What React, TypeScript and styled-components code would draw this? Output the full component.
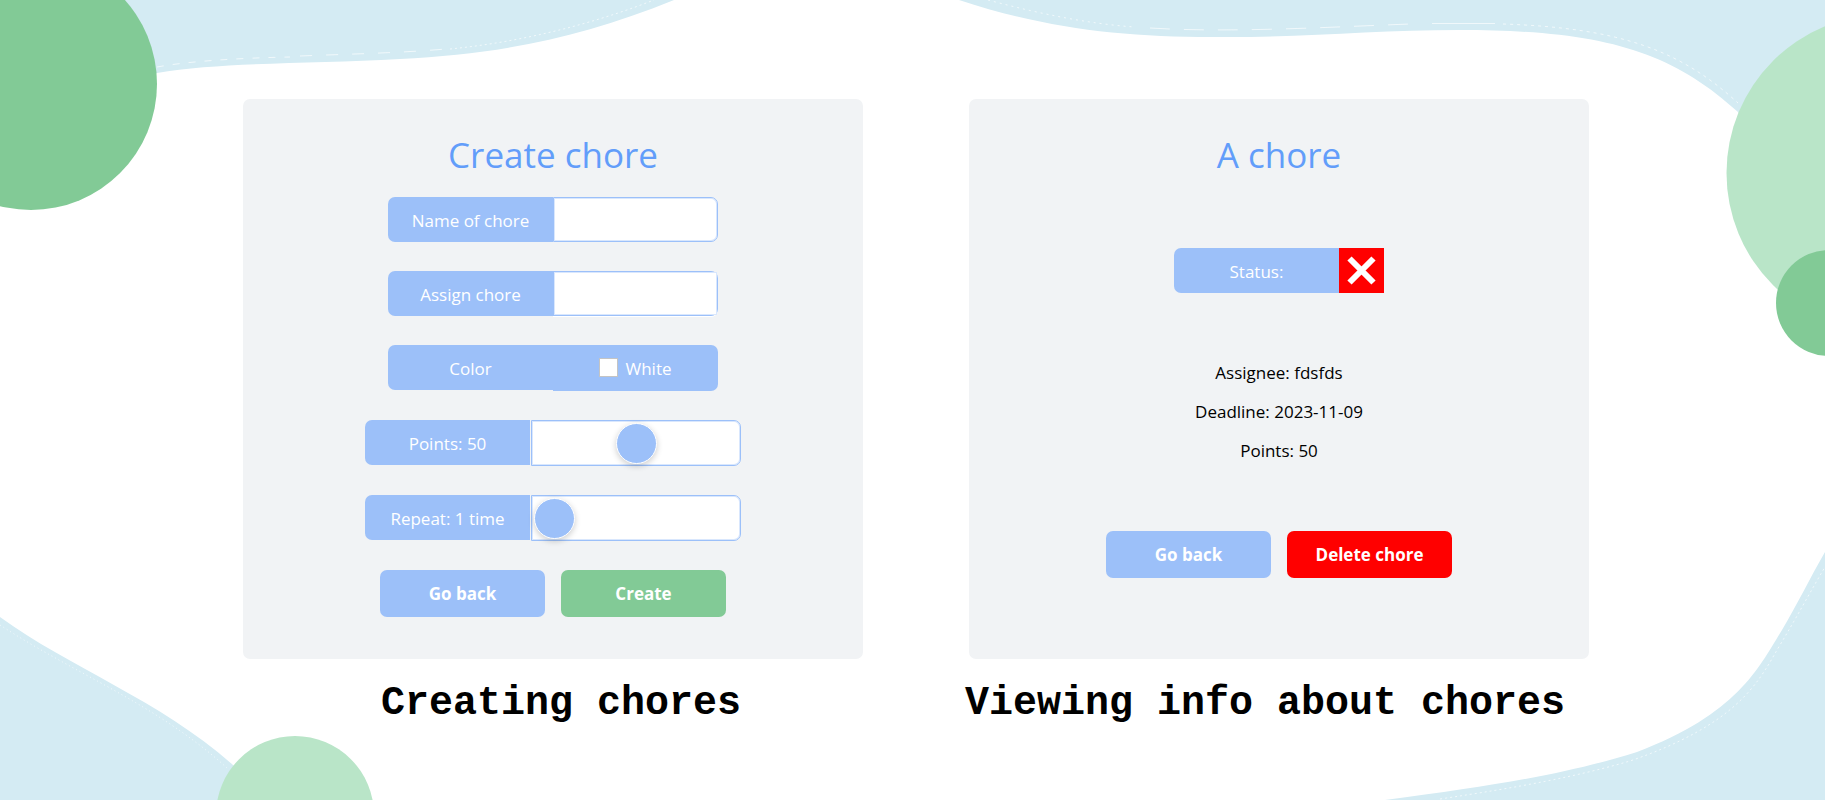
import React, { useState } from "react";
import styled, { createGlobalStyle } from "styled-components";

const color = {
  blue: "#9cc0f9",
  paleBlue: "#d9e7fd",
  title: "#629dfa",
  green: "#82ca96",
  mint: "#b9e5c8",
  sky: "#d4ebf3",
  card: "#f1f3f5",
  red: "#ff0000",
};

const GlobalStyle = createGlobalStyle`
  *, *::before, *::after { box-sizing: border-box; }
  body {
    margin: 0;
    background: #fff;
    font-family: "Segoe UI", "Open Sans", "Noto Sans", sans-serif;
    font-size: 17px;
    line-height: 24px;
    color: #000;
  }
`;

const Page = styled.main`
  position: relative;
  isolation: isolate;
  overflow: hidden;
  min-height: 100vh;
  padding: 99px 0 62px 7px;
`;

const Backdrop = styled.svg`
  position: absolute;
  inset: 0;
  z-index: -1;
  width: 100%;
  height: 100%;
`;

const Cards = styled.div`
  display: flex;
  justify-content: center;
  gap: 106px;
`;

const Card = styled.section`
  display: flex;
  flex-direction: column;
  align-items: center;
  width: 620px;
  min-height: 560px;
  padding: 28px 24px 42px;
  border-radius: 7px;
  background: ${color.card};
`;

const FormCard = styled(Card).attrs({ as: "form" })`
  gap: 29px;
`;

const Title = styled.h1<{ $space: number }>`
  margin: 0 0 ${(p) => p.$space}px;
  font-size: 35px;
  line-height: 56px;
  font-weight: 400;
  color: ${color.title};
`;

const Field = styled.div<{ $gap?: number }>`
  display: flex;
  align-items: flex-start;
  gap: ${(p) => p.$gap ?? 0}px;
`;

const Tag = styled.label`
  display: flex;
  align-items: center;
  justify-content: center;
  width: 165px;
  height: 45px;
  padding-top: 2px;
  border-radius: 7px 0 0 7px;
  background: ${color.blue};
  color: #fff;
`;

const TextBox = styled.input`
  width: 165px;
  height: 45px;
  padding: 0 12px;
  border: 1px solid ${color.blue};
  border-radius: 0 7px 7px 0;
  background: #fff;
  box-shadow: inset 0 0 0 1px ${color.paleBlue};
  font: inherit;
`;

const SelectFrame = styled.div`
  width: 165px;
  height: 45px;
  padding: 1px;
  border-radius: 0 7px 7px 0;
  background: ${color.blue};
  box-shadow: 0 1px 0 #fff;
`;

const Select = styled.select`
  display: block;
  width: 100%;
  height: 100%;
  padding: 0 12px;
  border: 0;
  border-radius: 0;
  appearance: none;
  background: #fff;
  box-shadow: inset 0 0 0 1px ${color.paleBlue};
  font: inherit;
`;

const ColorButton = styled.button`
  display: flex;
  align-items: center;
  justify-content: center;
  gap: 7px;
  width: 165px;
  height: 46px;
  padding: 2px 0 0;
  border: 0;
  border-radius: 0 7px 7px 0;
  background: ${color.blue};
  color: #fff;
  font: inherit;
`;

const Swatch = styled.span`
  width: 19px;
  height: 19px;
  margin-bottom: 3px;
  border: 1px solid #c4c4c4;
  background: #fff;
`;

const Slider = styled.input.attrs({ type: "range" })`
  appearance: none;
  width: 210px;
  height: 46px;
  margin: 0;
  padding: 0 2px;
  border: 1px solid ${color.blue};
  border-radius: 0 7px 7px 0;
  background: #fff;
  box-shadow: inset 0 0 0 1px ${color.paleBlue};

  &::-webkit-slider-thumb {
    appearance: none;
    width: 41px;
    height: 41px;
    border: 1px solid #fff;
    border-radius: 50%;
    background: ${color.blue};
    box-shadow: 0 2px 6px rgba(0, 0, 0, 0.2);
  }
`;

const Actions = styled.div`
  display: flex;
  gap: 16px;
`;

const Button = styled.button<{ $tone: string }>`
  width: 165px;
  height: 47px;
  padding: 0;
  border: 0;
  border-radius: 7px;
  background: ${(p) => p.$tone};
  color: #fff;
  font: inherit;
  font-weight: 700;
`;

const InfoCard = styled(Card)`
  justify-content: space-between;
  padding-bottom: 81px;
`;

const StatusTag = styled(Tag).attrs({ as: "span" })``;

const StatusButton = styled.button`
  display: flex;
  align-items: center;
  justify-content: center;
  width: 45px;
  height: 45px;
  padding: 0;
  border: 0;
  background: ${color.red};
`;

const Details = styled.div`
  display: grid;
  gap: 15px;
  text-align: center;
`;

const Detail = styled.p`
  margin: 0;
`;

const Captions = styled.div`
  display: flex;
  justify-content: center;
  gap: 224px;
  margin-top: 22px;
  padding-left: 114px;
`;

const Caption = styled.h2`
  margin: 0;
  font-family: "Courier New", "Liberation Mono", monospace;
  font-size: 40px;
  line-height: 46px;
  font-weight: 700;
  white-space: nowrap;
`;

function Background() {
  return (
    <Backdrop viewBox="0 0 1825 800" preserveAspectRatio="none" aria-hidden="true">
      <g fill={color.sky}>
        <path d="M0 110 L100 86 L157 73 C220 62 310 64 400 59 C500 54 580 38 674 0 H0Z" />
        <path d="M959 0 C1050 30 1130 38 1228 37 C1310 37 1380 30 1459 30 C1600 30 1670 50 1738 112 L1825 220 V0Z" />
        <path d="M0 617 C70 668 160 700 233 765 L270 800 H0Z" />
        <path d="M1385 800 C1500 785 1570 773 1637 752 C1740 713 1760 665 1782 630 C1798 603 1810 578 1825 552 V800Z" />
      </g>
      <g fill="none" stroke="#fff" strokeWidth="1" strokeOpacity="0.65">
        <path d="M157 67 C190 61 240 58 290 57" strokeDasharray="7 9" />
        <path d="M300 56 C350 54 400 53 446 49" strokeDasharray="12 14" />
        <path d="M450 49 C520 42 590 25 654 0" strokeDasharray="2 3" />
        <path d="M988 0 C1040 14 1090 24 1135 27" strokeDasharray="2 4" />
        <path d="M1150 28 C1230 33 1330 27 1410 24" strokeDasharray="20 14" />
        <path d="M1432 23.500 H1495" />
        <path d="M1503 24 C1620 28 1680 50 1738 103" strokeDasharray="3 4" />
        <path d="M0 625 C75 674 158 705 227 768" strokeDasharray="1 3" />
        <path d="M1440 799 C1520 787 1575 777 1630 761 C1735 725 1757 685 1777 650 C1797 617 1810 592 1825 567" strokeDasharray="2 3" />
      </g>
      <circle cx="31" cy="84" r="126" fill={color.green} />
      <circle cx="1885" cy="173" r="158.500" fill={color.mint} />
      <circle cx="1829" cy="303" r="53" fill={color.green} />
      <circle cx="295" cy="815" r="79" fill={color.mint} />
    </Backdrop>
  );
}

export default function App() {
  const [points, setPoints] = useState(50);
  const [repeat, setRepeat] = useState(1);

  return (
    <Page>
      <GlobalStyle />
      <Background />
      <Cards>
        <FormCard>
          <Title $space={-15}>Create chore</Title>
          <Field>
            <Tag htmlFor="name">Name of chore</Tag>
            <TextBox id="name" type="text" />
          </Field>
          <Field>
            <Tag htmlFor="assign">Assign chore</Tag>
            <SelectFrame>
              <Select id="assign" defaultValue="">
                <option value="" />
              </Select>
            </SelectFrame>
          </Field>
          <Field>
            <Tag htmlFor="color">Color</Tag>
            <ColorButton id="color" type="button">
              <Swatch />
              White
            </ColorButton>
          </Field>
          <Field $gap={1}>
            <Tag htmlFor="points">Points: {points}</Tag>
            <Slider
              id="points"
              min={0}
              max={100}
              value={points}
              onChange={(e) => setPoints(Number(e.target.value))}
            />
          </Field>
          <Field $gap={1}>
            <Tag htmlFor="repeat">
              Repeat: {repeat} {repeat === 1 ? "time" : "times"}
            </Tag>
            <Slider
              id="repeat"
              min={1}
              max={30}
              value={repeat}
              onChange={(e) => setRepeat(Number(e.target.value))}
            />
          </Field>
          <Actions>
            <Button type="button" $tone={color.blue}>Go back</Button>
            <Button type="button" $tone={color.green}>Create</Button>
          </Actions>
        </FormCard>

        <InfoCard>
          <Title $space={-3}>A chore</Title>
          <Field>
            <StatusTag>Status:</StatusTag>
            <StatusButton type="button" aria-label="Not done">
              <svg width="29" height="29" viewBox="0 0 29 29" aria-hidden="true">
                <path d="M2.500 2.500 L26.500 26.500 M26.500 2.500 L2.500 26.500" stroke="#fff" strokeWidth="6" />
              </svg>
            </StatusButton>
          </Field>
          <Details>
            <Detail>Assignee: fdsfds</Detail>
            <Detail>Deadline: 2023-11-09</Detail>
            <Detail>Points: 50</Detail>
          </Details>
          <Actions>
            <Button type="button" $tone={color.blue}>Go back</Button>
            <Button type="button" $tone={color.red}>Delete chore</Button>
          </Actions>
        </InfoCard>
      </Cards>
      <Captions>
        <Caption>Creating chores</Caption>
        <Caption>Viewing info about chores</Caption>
      </Captions>
    </Page>
  );
}
